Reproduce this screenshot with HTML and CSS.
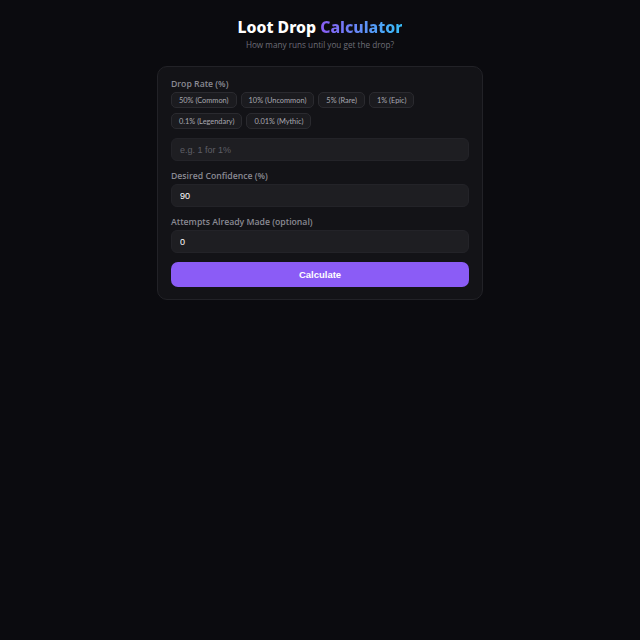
FILE: index.html
```html
<!DOCTYPE html>
<html lang="en">
<head>
    <meta charset="UTF-8">
    <meta name="viewport" content="width=device-width, initial-scale=1.0">
    <title>Loot Drop Calculator</title>
    <link rel="stylesheet" href="styles.css">
</head>
<body>
    <!-- Header -->
    <header class="page-header">
        <h1 class="title">Loot Drop <span class="title-accent">Calculator</span></h1>
        <p class="subtitle">How many runs until you get the drop?</p>
    </header>

    <!-- Calculator Card -->
    <main class="card">
        <div class="field">
            <label class="field-label">Drop Rate (%)</label>
            <div class="presets">
                <button class="chip">50% (Common)</button>
                <button class="chip">10% (Uncommon)</button>
                <button class="chip">5% (Rare)</button>
                <button class="chip">1% (Epic)</button>
                <button class="chip">0.1% (Legendary)</button>
                <button class="chip">0.01% (Mythic)</button>
            </div>
            <input type="text" class="input" placeholder="e.g. 1 for 1%">
        </div>

        <div class="field">
            <label class="field-label">Desired Confidence (%)</label>
            <input type="text" class="input" value="90">
        </div>

        <div class="field">
            <label class="field-label">Attempts Already Made (optional)</label>
            <input type="text" class="input" value="0">
        </div>

        <button class="btn-calc">Calculate</button>
    </main>
</body>
</html>
```

FILE: styles.css
```css
/* Reset and Base Styles */
* {
    margin: 0;
    padding: 0;
    box-sizing: border-box;
}

:root {
    --bg: #0b0b0f;
    --card: #131317;
    --card-border: #222227;
    --field: #1e1e22;
    --chip: #1b1b1f;
    --chip-border: #2a2a2f;
    --text: #e5e5ea;
    --muted: #8a8a93;
    --purple: #8b5cf6;
    --cyan: #38bdf8;
}

body {
    min-height: 100vh;
    background-color: var(--bg);
    color: var(--text);
    font-family: Lato, "Open Sans", sans-serif;
    display: flex;
    flex-direction: column;
    align-items: center;
    padding-top: 17px;
}

/* Header */
.page-header {
    text-align: center;
    margin-bottom: 16px;
}

.title {
    font-family: "Noto Sans", "Open Sans", sans-serif;
    font-size: 15.8px;
    font-weight: 800;
    color: #ffffff;
    line-height: 20px;
}

.title-accent {
    background: linear-gradient(90deg, var(--purple), var(--cyan));
    -webkit-background-clip: text;
    background-clip: text;
    color: transparent;
}

.subtitle {
    font-family: "Open Sans", sans-serif;
    font-size: 8.2px;
    color: #6e6e77;
    margin-top: 2px;
}

/* Card */
.card {
    width: 326px;
    background-color: var(--card);
    border: 1px solid var(--card-border);
    border-radius: 10px;
    padding: 11px 13px 12px;
    display: flex;
    flex-direction: column;
    gap: 9px;
}

.field {
    display: flex;
    flex-direction: column;
}

.field-label {
    font-family: "Open Sans", sans-serif;
    font-size: 8.7px;
    font-weight: 600;
    color: var(--muted);
    margin-bottom: 2px;
    line-height: 12px;
}

.presets {
    display: flex;
    flex-wrap: wrap;
    gap: 5px 4px;
    margin-bottom: 9px;
}

.chip {
    font-family: Lato, sans-serif;
    font-size: 7.4px;
    color: #a8a8b0;
    background-color: var(--chip);
    border: 1px solid var(--chip-border);
    border-radius: 5px;
    height: 16px;
    padding: 0 7px;
    cursor: pointer;
}

.input {
    height: 23px;
    width: 100%;
    background-color: var(--field);
    border: 1px solid #232328;
    border-radius: 6px;
    padding: 0 8px;
    font-family: "Liberation Sans", Arial, sans-serif;
    font-size: 9px;
    color: #ffffff;
    outline: none;
}

.input::placeholder {
    color: #5e5e66;
}

.btn-calc {
    height: 25px;
    width: 100%;
    background-color: var(--purple);
    color: #ffffff;
    border: none;
    border-radius: 7px;
    font-family: "Liberation Sans", Arial, sans-serif;
    font-size: 9.5px;
    font-weight: bold;
    cursor: pointer;
}
```
